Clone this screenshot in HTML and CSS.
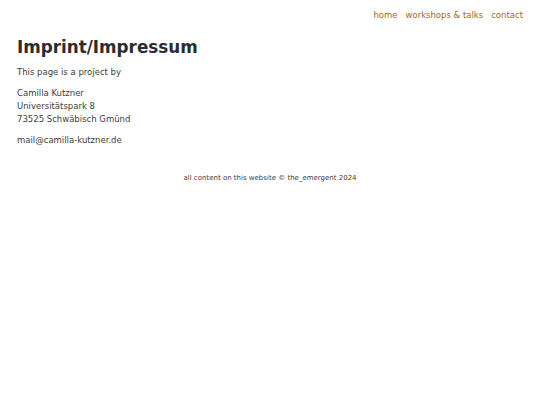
FILE: index.html
```
<!DOCTYPE html>
<html>
<head>
<meta charset="utf-8">
<link rel="stylesheet" href="styles.css">
</head>
<body>
<header class="top">
  <nav class="nav">
    <a href="#">home</a>
    <a href="#">workshops &amp; talks</a>
    <a href="#">contact</a>
  </nav>
</header>
<main class="content">
  <h1 class="title">Imprint/Impressum</h1>
  <p class="para">This page is a project by</p>
  <p class="para">Camilla Kutzner<br>Universitätspark 8<br>73525 Schwäbisch Gmünd</p>
  <p class="para">mail@camilla-kutzner.de</p>
</main>
<footer class="foot">all content on this website © the_emergent 2024</footer>
</body>
</html>
```
FILE: styles.css
```
html, body { margin: 0; padding: 0; background: #fff; }
body {
  font-family: "DejaVu Sans", sans-serif;
  color: #404040;
  font-size: 8.5px;
  line-height: 13px;
}
.top { display: flex; justify-content: flex-end; padding: 9px 17px 0 17px; }
.nav { display: flex; gap: 8px; }
.nav a { color: #a06a25; text-decoration: none; font-size: 8.5px; line-height: 12px; }
.content { padding: 0 17px; }
.title { font-size: 16.8px; font-weight: bold; line-height: 22px; margin: 15px 0 8px 0; color: #2c2c30; }
.para { margin: 0 0 8px 0; }
.foot { text-align: center; font-size: 7px; line-height: 10px; margin-top: 26px; color: #404040; }
```
